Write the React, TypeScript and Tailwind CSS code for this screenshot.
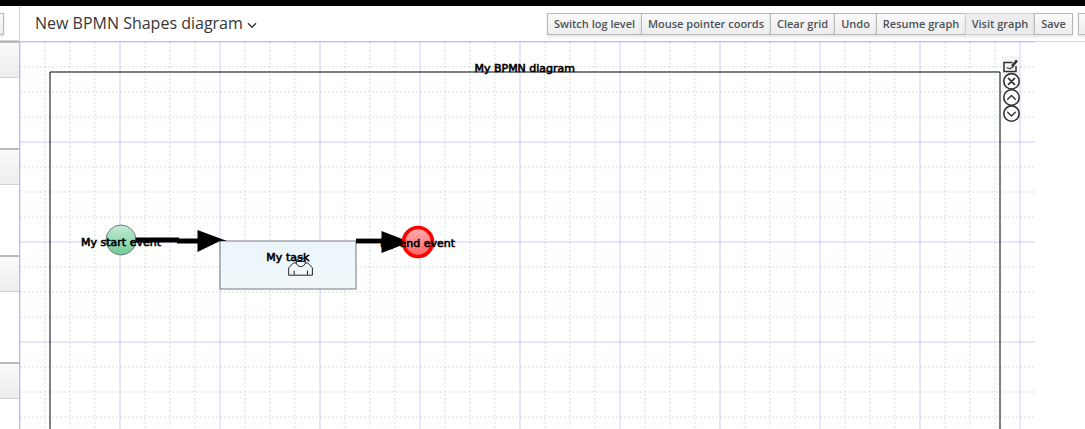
import React from "react";

const actions = [
  { label: "Switch log level", width: "w-[95px]" },
  { label: "Mouse pointer coords", width: "w-[130px]" },
  { label: "Clear grid", width: "w-[65px]" },
  { label: "Undo", width: "w-[43px]" },
  { label: "Resume graph", width: "w-[90px]" },
  { label: "Visit graph", width: "w-[70px]", active: true },
  { label: "Save", width: "w-[39px]" },
];

function Toolbar() {
  return (
    <div className="flex h-[22px] pl-px">
      {actions.map((a) => (
        <button
          key={a.label}
          className={
            "-ml-px flex h-[22px] shrink-0 items-center justify-center whitespace-nowrap border text-[11px] font-semibold text-[#4d5258] shadow-[0_2px_3px_rgba(3,3,3,0.1)] " +
            a.width +
            (a.active
              ? " border-[#d0d0d0] bg-[#ececec]"
              : " border-[#b7b7b7] bg-linear-to-b from-[#fafafa] to-[#ededed]")
          }
        >
          {a.label}
        </button>
      ))}
    </div>
  );
}

function PalettePanel() {
  return (
    <div className="h-[107px] shrink-0">
      <div className="h-[37px] border-t-2 border-b border-t-[#bbb] border-b-[#d1d1d1] bg-linear-to-b from-[#fafafa] to-[#ededed]" />
    </div>
  );
}

function Grid() {
  const cols = Array.from({ length: 41 }, (_, i) => i * 25);
  const rows = Array.from({ length: 16 }, (_, i) => i * 25);
  return (
    <g fill="none">
      {cols.map((x, i) => (
        <line key={"c" + x} x1={x} y1={0} x2={x} y2={387}
          stroke={i % 4 === 0 ? "#0000ff" : "#008000"}
          strokeOpacity={0.2}
          strokeDasharray={i % 4 === 0 ? undefined : "2 2"} />
      ))}
      {rows.map((y, i) => (
        <line key={"r" + y} x1={0} y1={y} x2={1015} y2={y}
          stroke={i % 4 === 0 ? "#0000ff" : "#008000"}
          strokeOpacity={0.2}
          strokeDasharray={i % 4 === 0 ? undefined : "2 2"} />
      ))}
    </g>
  );
}

function Label({ x, y, width, children }: { x: number; y: number; width: number; children: string }) {
  return (
    <text x={x} y={y} textLength={width} fontSize="11" fill="#000" stroke="#000" strokeWidth="0.6">
      {children}
    </text>
  );
}

function Tools() {
  return (
    <g fill="none" stroke="#333" strokeLinecap="round" strokeLinejoin="round">
      <rect x="982" y="14" width="17" height="17" fill="#f5f5f5" stroke="none" />
      <rect x="982" y="31" width="8" height="16" fill="#f5f5f5" stroke="none" />
      <path d="M992.5 20.5H984v9h12v-5.5" strokeWidth="1.5" strokeLinejoin="miter" strokeLinecap="butt" />
      <path d="M987 25.7l3 1 3.5-2.2" strokeWidth="1.1" />
      <path d="M992 24.3l5-6" strokeWidth="2.6" strokeLinecap="butt" />
      <g fill="#fff" strokeWidth="1.6">
        <circle cx="991.5" cy="39.3" r="7.7" />
        <circle cx="991.5" cy="55.5" r="7.7" />
        <circle cx="991.5" cy="71.6" r="7.7" />
      </g>
      <path d="M988.5 36.3l6 6m0-6l-6 6" strokeWidth="1.7" />
      <path d="M987.7 57.2l3.8-3.7 3.8 3.7M987.7 70.2l3.8 3.7 3.8-3.7" strokeWidth="1.4" />
    </g>
  );
}

function Diagram() {
  return (
    <svg width="1065" height="387" className="block overflow-visible" fontFamily="'DejaVu Sans', sans-serif">
      <defs>
        <linearGradient id="start" x1="0" y1="0" x2="0" y2="1">
          <stop offset="0" stopColor="#c6ecd6" />
          <stop offset="1" stopColor="#70c995" />
        </linearGradient>
        <linearGradient id="task" x1="0" y1="0" x2="0" y2="1">
          <stop offset="0" stopColor="#ebf5fa" />
          <stop offset="1" stopColor="#f1f8fb" />
        </linearGradient>
        <linearGradient id="end" x1="0" y1="0" x2="0" y2="1">
          <stop offset="0" stopColor="#ffb0b0" />
          <stop offset="1" stopColor="#ff6464" />
        </linearGradient>
      </defs>
      <Grid />
      <path d="M30 390V30H980V390" fill="none" stroke="#000" />
      <Label x={454.5} y={30} width={100.5}>My BPMN diagram</Label>

      <circle cx="101" cy="198" r="15" fill="url(#start)" stroke="#6b8175" />
      <Label x={61} y={204} width={80}>My start event</Label>
      <path d="M115.5 198H159M157 199H180" fill="none" stroke="#000" strokeWidth="4.8" />
      <rect x="200" y="199" width="136" height="48" fill="url(#task)" stroke="#555b62" strokeOpacity="0.8" />
      <path d="M177.5 188L207 199H200L177.5 210Z" fill="#000" />
      <g fill="#f0f7fb" stroke="#202428">
        <path d="M268.7 233.2v-7.5l4.7-4.7h14.3l4.7 4.7v7.5z" />
        <circle cx="280.8" cy="220" r="4.6" />
        <path d="M276.3 219.5h9M274.2 232.7v-4M287.5 232.7v-4" fill="none" />
      </g>
      <Label x={246.3} y={219} width={43}>My task</Label>

      <path d="M336 199H366" stroke="#000" strokeWidth="4.8" />
      <path d="M361.5 189L390 200L361.5 211Z" fill="#000" />
      <circle cx="398" cy="200" r="14.5" fill="url(#end)" stroke="#f00" strokeWidth="3.7" />
      <Label x={360} y={205} width={75}>My end event</Label>
      <Tools />
    </svg>
  );
}

export default function App() {
  return (
    <div className="flex h-[429px] w-[1085px] flex-col overflow-hidden bg-white font-['Open_Sans',sans-serif]">
      <div className="h-1.5 shrink-0 bg-[#030303]" />
      <div className="flex min-h-0 flex-1">
        <aside className="flex w-5 shrink-0 flex-col overflow-hidden border-r border-[#d1d1d1]">
          <div className="h-[35px] shrink-0 border-b border-[#d1d1d1] pt-[7px]">
            <div className="h-[22px] w-1 border border-l-0 border-[#b7b7b7] bg-linear-to-b from-[#fafafa] to-[#ededed] shadow-[0_2px_3px_rgba(3,3,3,0.1)]" />
          </div>
          <PalettePanel />
          <PalettePanel />
          <PalettePanel />
          <PalettePanel />
        </aside>
        <main className="flex min-w-0 flex-1 flex-col">
          <header className="flex h-9 shrink-0 items-start border-b border-[#d8d8d8] pt-[7px]">
            <div className="flex w-[527px] shrink-0 items-center pl-[15px]">
              <h1 className="-mt-px whitespace-nowrap text-[16px] leading-[22px] text-[#363636]">New BPMN Shapes diagram</h1>
              <svg width="10" height="7" viewBox="0 0 10 7" className="ml-1 mt-1" fill="none" stroke="#363636" strokeWidth="1.4">
                <path d="M1 1.2l4 4 4-4" />
              </svg>
            </div>
            <Toolbar />
            <div className="ml-[5px] h-[22px] w-10 shrink-0 border border-[#b7b7b7] bg-linear-to-b from-[#fafafa] to-[#ededed] shadow-[0_2px_3px_rgba(3,3,3,0.1)]" />
          </header>
          <Diagram />
        </main>
      </div>
    </div>
  );
}
